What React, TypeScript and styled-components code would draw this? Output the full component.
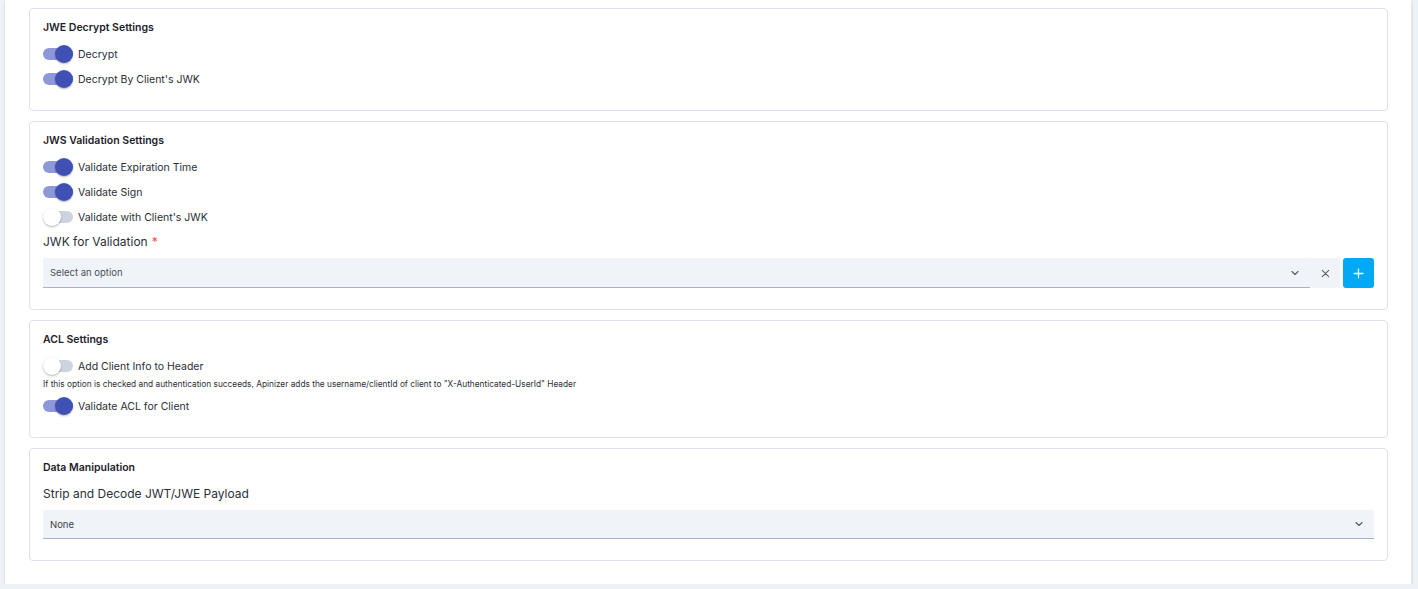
import React from "react";
import styled, { createGlobalStyle } from "styled-components";

const Global = createGlobalStyle`
  html, body { margin: 0; padding: 0; background: #eef1f6; }
  body { font-family: Inter, "Noto Sans", Arial, sans-serif; color: #2b2f36; }
  * { box-sizing: border-box; }
`;

const Page = styled.div`
  width: 1407px;
  margin-left: 5px;
  background: #ffffff;
  padding: 8px 23px 23px 24px;
  border-right: 1px solid #e3e7ef;
  box-shadow: 0 2px 2px rgba(0, 0, 0, 0.18);
  display: flex;
  flex-direction: column;
  gap: 10px;
`;

const Card = styled.section`
  border: 1px solid #dce1eb;
  border-radius: 4px;
  padding: 11px 13px 21px 13px;
  display: flex;
  flex-direction: column;
`;

const CardTitle = styled.div`
  font-size: 10.5px;
  font-weight: 600;
  line-height: 16px;
  color: #1e2229;
  margin-bottom: 8px;
`;

const Rows = styled.div`
  display: flex;
  flex-direction: column;
  gap: 5px;
`;

const ToggleRow = styled.label`
  display: flex;
  align-items: center;
  gap: 5px;
  height: 20px;
  font-size: 10.5px;
  color: #2a2e36;
`;

const Switch = styled.span<{ $on: boolean }>`
  position: relative;
  width: 30px;
  height: 20px;
  flex: none;
  &::before {
    content: "";
    position: absolute;
    left: 0;
    top: 4px;
    width: 30px;
    height: 12px;
    border-radius: 6px;
    background: ${(p) => (p.$on ? "#8e98d8" : "#ccd3df")};
  }
  &::after {
    content: "";
    position: absolute;
    top: 1px;
    left: ${(p) => (p.$on ? "12px" : "0px")};
    width: 18px;
    height: 18px;
    border-radius: 50%;
    background: ${(p) => (p.$on ? "#3f51b5" : "#ffffff")};
    box-shadow: 0 1px 2px rgba(0, 0, 0, 0.3);
  }
`;

const Help = styled.div`
  font-size: 8.3px;
  line-height: 12px;
  color: #2b2f36;
  margin-top: -3px;
  margin-bottom: 1px;
`;

const FieldLabel = styled.div<{ $gap: number }>`
  font-size: 12px;
  line-height: 20px;
  color: #2b2f36;
  margin-top: ${(p) => p.$gap}px;
  margin-bottom: 6px;
`;

const Req = styled.span`
  color: #f04a4a;
  margin-left: 4px;
`;

const SelectLine = styled.div<{ $h: number }>`
  display: flex;
  align-items: stretch;
  height: ${(p) => p.$h}px;
`;

const SelectBox = styled.div`
  flex: 1;
  display: flex;
  align-items: center;
  justify-content: space-between;
  background: #f0f3f8;
  border-bottom: 1px solid #a9b3c6;
  border-radius: 3px 3px 0 0;
  padding: 0 9px 0 7px;
  font-size: 9.5px;
  color: #3a3f47;
`;

const Placeholder = styled.span`
  color: #4a505a;
`;

const ClearBtn = styled.div`
  width: 30px;
  display: flex;
  align-items: center;
  justify-content: center;
  background: #f0f3f8;
  color: #555b66;
`;

const AddBtn = styled.button`
  width: 31px;
  margin-left: 3px;
  border: none;
  border-radius: 3px;
  background: #03a9f4;
  color: #fff;
  display: flex;
  align-items: center;
  justify-content: center;
  padding: 0;
`;

const Chevron = () => (
  <svg width="12" height="12" viewBox="0 0 24 24" fill="none" stroke="#555b66" strokeWidth="2.2" strokeLinecap="round" strokeLinejoin="round">
    <path d="M6 9l6 6 6-6" />
  </svg>
);

const Cross = () => (
  <svg width="11" height="11" viewBox="0 0 24 24" fill="none" stroke="#555b66" strokeWidth="2.2" strokeLinecap="round">
    <path d="M5 5l14 14M19 5L5 19" />
  </svg>
);

const Plus = () => (
  <svg width="13" height="13" viewBox="0 0 24 24" fill="none" stroke="#fff" strokeWidth="2.4" strokeLinecap="round">
    <path d="M12 4v16M4 12h16" />
  </svg>
);

const Toggle = ({ on, label }: { on: boolean; label: string }) => (
  <ToggleRow>
    <Switch $on={on} />
    {label}
  </ToggleRow>
);

export default function App() {
  return (
    <>
      <Global />
      <Page>
        <Card>
          <CardTitle>JWE Decrypt Settings</CardTitle>
          <Rows>
            <Toggle on label="Decrypt" />
            <Toggle on label="Decrypt By Client's JWK" />
          </Rows>
        </Card>

        <Card>
          <CardTitle>JWS Validation Settings</CardTitle>
          <Rows>
            <Toggle on label="Validate Expiration Time" />
            <Toggle on label="Validate Sign" />
            <Toggle on={false} label="Validate with Client's JWK" />
          </Rows>
          <FieldLabel $gap={5}>
            JWK for Validation<Req>*</Req>
          </FieldLabel>
          <SelectLine $h={30}>
            <SelectBox>
              <Placeholder>Select an option</Placeholder>
              <Chevron />
            </SelectBox>
            <ClearBtn>
              <Cross />
            </ClearBtn>
            <AddBtn>
              <Plus />
            </AddBtn>
          </SelectLine>
        </Card>

        <Card>
          <CardTitle>ACL Settings</CardTitle>
          <Rows>
            <Toggle on={false} label="Add Client Info to Header" />
            <Help>
              If this option is checked and authentication succeeds, Apinizer adds the username/clientId of client to "X-Authenticated-UserId" Header
            </Help>
            <Toggle on label="Validate ACL for Client" />
          </Rows>
        </Card>

        <Card>
          <CardTitle>Data Manipulation</CardTitle>
          <FieldLabel $gap={0}>Strip and Decode JWT/JWE Payload</FieldLabel>
          <SelectLine $h={29}>
            <SelectBox>
              <span>None</span>
              <Chevron />
            </SelectBox>
          </SelectLine>
        </Card>
      </Page>
    </>
  );
}
